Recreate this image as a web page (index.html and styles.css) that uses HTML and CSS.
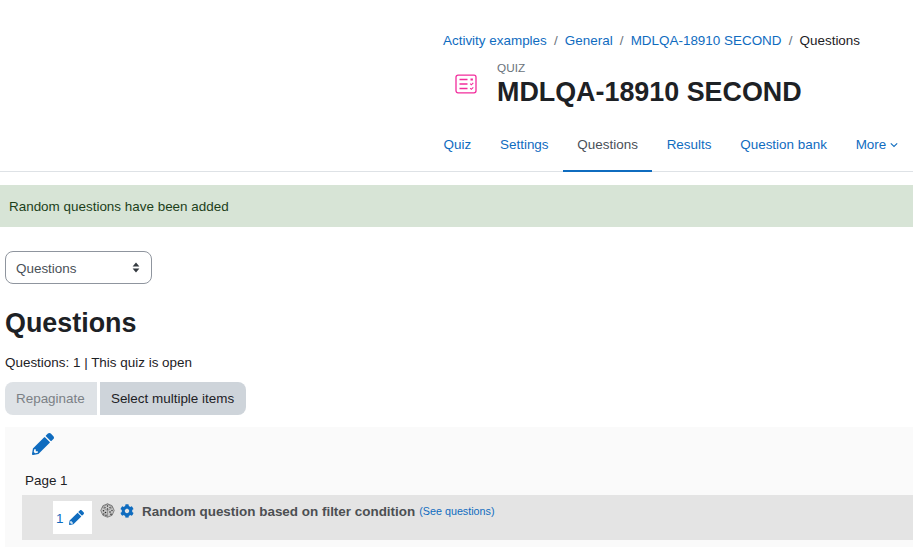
FILE: index.html
```html
<!DOCTYPE html>
<html lang="en">
<head>
<meta charset="utf-8">
<title>Questions</title>
<link rel="stylesheet" href="styles.css">
</head>
<body>
<header class="page-header">
  <nav class="breadcrumb">
    <a href="#">Activity examples</a><span class="sep">/</span><a href="#">General</a><span class="sep">/</span><a href="#">MDLQA-18910 SECOND</a><span class="sep">/</span><span>Questions</span>
  </nav>
  <div class="title-row">
    <div class="activity-icon">
      <svg width="22" height="20" viewBox="0 0 22 20" fill="none" stroke="#f22c9c" stroke-width="1.3">
        <rect x="1" y="1.2" width="20" height="17.6" rx="2"/>
        <path d="M4.5 5.5h8M4.5 10h8M4.5 14.500h8" stroke-width="1.4"/>
        <path d="M15.500 5.500h2.400" stroke-width="2"/>
        <path d="M15.200 9.700l1.100 1.100 2-2M15.200 14.200l1.100 1.100 2-2" stroke-width="1.100"/>
      </svg>
    </div>
    <div class="title-text">
      <div class="eyebrow">QUIZ</div>
      <h1 class="title">MDLQA-18910 SECOND</h1>
    </div>
  </div>
  <ul class="tabs">
    <li><a href="#">Quiz</a></li>
    <li><a href="#">Settings</a></li>
    <li><a href="#" class="active">Questions</a></li>
    <li><a href="#">Results</a></li>
    <li><a href="#">Question bank</a></li>
    <li><a href="#">More<svg class="caret" width="8" height="6" viewBox="0 0 8 6" fill="none" stroke="#0f6cbf" stroke-width="1.1"><path d="M.8 1.400L4 4.400l3.200-3"/></svg></a></li>
  </ul>
</header>

<div class="alert">Random questions have been added</div>

<main class="content">
  <div class="select">
    <span class="select-label">Questions</span>
    <svg width="8" height="11" viewBox="0 0 8 11" fill="#343a40"><path d="M4 0.500L7.400 4.400H.6zM4 10.500L.6 6.600h6.800z"/></svg>
  </div>
  <h2 class="heading">Questions</h2>
  <p class="status">Questions: 1 | This quiz is open</p>
  <div class="actions">
    <button class="btn btn-disabled" type="button">Repaginate</button>
    <button class="btn btn-secondary" type="button">Select multiple items</button>
  </div>
  <section class="panel">
    <div class="edit-row">
      <svg width="22" height="22" viewBox="0 0 512 512" fill="#0f6cbf"><path d="M497.900 142.100l-46.100 46.100c-4.700 4.700-12.300 4.700-17 0l-111-111c-4.700-4.700-4.700-12.300 0-17l46.100-46.100c18.700-18.700 49.100-18.700 67.900 0l60.100 60.100c18.800 18.700 18.800 49.100 0 67.900zM284.200 99.800L21.600 362.400.4 483.900c-2.900 16.400 11.400 30.600 27.800 27.800l121.500-21.300 262.600-262.600c4.700-4.700 4.700-12.300 0-17l-111-111c-4.800-4.700-12.400-4.700-17.100 0zM88 424h48v36.300l-64.500 11.300-31.100-31.100L51.700 376H88v48z"/></svg>
    </div>
    <div class="page-label">Page 1</div>
    <div class="slot">
      <div class="slot-num">
        <a href="#" class="slot-n">1</a>
        <svg width="15" height="15" viewBox="0 0 512 512" fill="#0f6cbf"><path d="M497.900 142.100l-46.100 46.100c-4.700 4.700-12.300 4.700-17 0l-111-111c-4.700-4.700-4.700-12.300 0-17l46.100-46.100c18.700-18.700 49.100-18.700 67.900 0l60.100 60.100c18.800 18.700 18.800 49.100 0 67.900zM284.200 99.800L21.600 362.400.4 483.900c-2.900 16.400 11.400 30.600 27.800 27.800l121.500-21.300 262.600-262.600c4.700-4.700 4.700-12.300 0-17l-111-111c-4.800-4.700-12.400-4.700-17.100 0zM88 424h48v36.300l-64.500 11.300-31.100-31.100L51.700 376H88v48z"/></svg>
      </div>
      <div class="slot-body">
        <svg class="dice" width="15" height="15" viewBox="0 0 15 15">
          <path d="M7.500 .8l4.600 1.900 2.100 4.800-2.100 4.800-4.600 1.900-4.600-1.900L.8 7.500l2.100-4.800z" fill="#c8c8c8" stroke="#6a6a6a" stroke-width=".8"/>
          <path d="M7.500 1L2.500 4.500l5 3 5-3zM7.500 7.500V14" fill="none" stroke="#666" stroke-width=".5"/>
          <g fill="#2a2a2a"><circle cx="7.500" cy="3" r=".7"/><circle cx="5" cy="4.600" r=".7"/><circle cx="10" cy="4.600" r=".7"/><circle cx="7.500" cy="6" r=".7"/><circle cx="3.500" cy="7.800" r=".8"/><circle cx="5.500" cy="9.500" r=".8"/><circle cx="3.800" cy="11" r=".7"/><circle cx="6" cy="12.300" r=".7"/><circle cx="10" cy="9" r=".8"/><circle cx="12" cy="7.500" r=".7"/><circle cx="11" cy="11.300" r=".8"/></g>
        </svg>
        <svg class="gear" width="14" height="14" viewBox="0 0 512 512" fill="#0f6cbf"><path d="M487.400 315.700l-42.600-24.600c4.300-23.200 4.300-47 0-70.200l42.600-24.600c4.900-2.800 7.100-8.600 5.500-14-11.100-35.600-30-67.800-54.700-94.600-3.800-4.100-10-5.100-14.800-2.300L380.800 110c-17.900-15.400-38.500-27.300-60.800-35.100V25.800c0-5.600-3.900-10.500-9.400-11.700-36.700-8.200-74.300-7.800-109.200 0-5.500 1.200-9.400 6.100-9.400 11.700V75c-22.200 7.900-42.800 19.800-60.800 35.100L88.700 85.500c-4.900-2.800-11-1.900-14.800 2.300-24.700 26.700-43.600 58.900-54.700 94.600-1.700 5.400.6 11.200 5.500 14L67.300 221c-4.300 23.200-4.300 47 0 70.200l-42.600 24.600c-4.900 2.800-7.100 8.600-5.500 14 11.100 35.600 30 67.800 54.700 94.600 3.800 4.100 10 5.100 14.800 2.300l42.600-24.600c17.900 15.400 38.500 27.300 60.800 35.100v49.200c0 5.600 3.900 10.500 9.400 11.700 36.700 8.200 74.300 7.800 109.200 0 5.500-1.200 9.400-6.100 9.400-11.700v-49.200c22.200-7.900 42.800-19.800 60.800-35.100l42.600 24.600c4.900 2.800 11 1.900 14.800-2.300 24.700-26.700 43.600-58.900 54.700-94.600 1.500-5.500-.7-11.300-5.600-14.100zM256 336c-44.100 0-80-35.900-80-80s35.900-80 80-80 80 35.900 80 80-35.900 80-80 80z"/></svg>
        <span class="q-name">Random question based on filter condition</span>
        <a href="#" class="q-link">(See questions)</a>
      </div>
    </div>
  </section>
</main>
</body>
</html>
```
FILE: styles.css
```css
* { box-sizing: border-box; }
html, body { margin: 0; padding: 0; height: 547px; overflow: hidden; background: #fff; }
body { font-family: "Liberation Sans", Arial, sans-serif; font-size: 13.44px; color: #1d2125; }
a { color: #0f6cbf; text-decoration: none; }

.page-header { padding-top: 33px; border-bottom: 1px solid #dee2e6; }
.breadcrumb { margin-left: 443px; line-height: 16px; white-space: nowrap; }
.sep { color: #6a737b; padding: 0 7.15px; }
.title-row { display: flex; margin: 4px 0 0 455px; height: 52px; }
.activity-icon { width: 42px; padding-top: 21px; }
.activity-icon svg { display: block; }
.eyebrow { font-size: 11.76px; color: #6a737b; line-height: 14px; margin-top: 8px; }
.title { margin: 1px 0 0; font-size: 26.88px; font-weight: 700; line-height: 32px; white-space: nowrap; }

.tabs { display: flex; list-style: none; margin: 21px 0 0 429.2px; padding: 0; height: 45px; }
.tabs a { display: block; height: 46px; line-height: 27px; padding: 5px 14.4px 0; border-bottom: 2px solid transparent; white-space: nowrap; }
.tabs a.active { color: #495057; border-bottom-color: #0f6cbf; }
.caret { margin-left: 4px; vertical-align: 1px; }

.alert { margin-top: 13px; height: 42px; line-height: 43px; padding-left: 9px; background: #d7e4d6; color: #1c3f1a; }

.content { padding: 24px 0 0 5px; }
.select { width: 147px; height: 33px; border: 1px solid #8f959e; border-radius: 8px; display: flex; align-items: center; justify-content: space-between; padding: 0 11px 0 10px; color: #495057; }
.select-label { padding-top: 1px; }
.heading { margin: 22px 0 0; font-size: 26.88px; line-height: 34px; font-weight: 700; }
.status { margin: 15px 0 0; line-height: 16px; }
.actions { display: flex; gap: 3px; margin-top: 11px; }
.btn { height: 33px; border: 0; padding: 0 11.4px; font: inherit; }
.btn-disabled { background: #dee2e6; color: #7b8085; border-radius: 8px 0 0 8px; padding: 0 11.8px 0 11px; }
.btn-secondary { background: #ced4da; color: #1d2125; border-radius: 0 8px 8px 0; }

.panel { margin-top: 12px; background: #fafafa; height: 120px; }
.edit-row { height: 40px; padding: 6px 0 0 27px; }
.edit-row svg { display: block; }
.page-label { margin: 5px 0 0 20px; line-height: 16px; padding-top: 1px; }
.slot { display: flex; margin: 6px 0 0 17px; height: 45px; background: #e4e4e4; }
.slot-num { margin: 6px 0 0 31px; width: 39px; height: 33px; background: #fff; display: flex; align-items: center; padding-left: 3px; gap: 5.5px; }
.slot-n { padding-top: 2px; }
.slot-body { margin: 0 0 0 8px; padding-top: 8px; display: flex; align-items: flex-start; height: 33px; }
.dice { margin-right: 5px; }
.gear { margin: 1px 8px 0 0; }
.q-name { font-weight: 700; color: #4c4f52; line-height: 17px; white-space: nowrap; }
.q-link { font-size: 10.75px; margin: 1px 0 0 4px; line-height: 14px; white-space: nowrap; }
```
